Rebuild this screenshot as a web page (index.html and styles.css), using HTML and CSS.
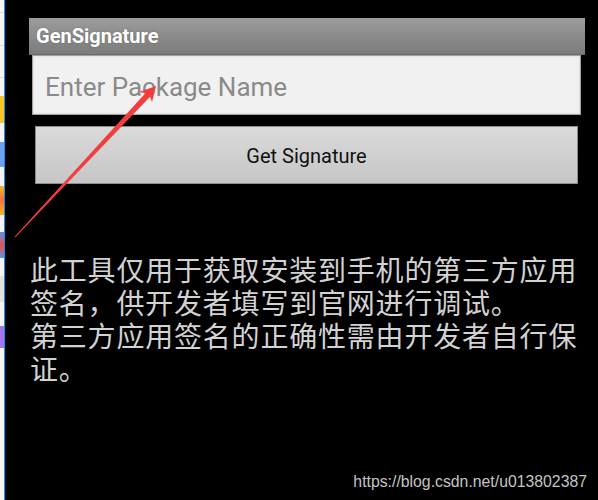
FILE: index.html
```html
<!DOCTYPE html>
<html lang="zh">
<head>
    <meta charset="UTF-8">
    <meta name="viewport" content="width=device-width, initial-scale=1.0">
    <title>GenSignature</title>
    <link rel="stylesheet" href="styles.css">
</head>
<body>

    <div class="screen">
        <div class="side-strip"></div>

        <div class="app">
            <div class="title-bar">GenSignature</div>
            <div class="input-container">
                <input type="text" class="input-field" placeholder="Enter Package Name">
            </div>
            <button type="button" class="sign-btn">Get Signature</button>
            <p class="note">此工具仅用于获取安装到手机的第三方应用签名，供开发者填写到官网进行调试。<br>第三方应用签名的正确性需由开发者自行保证。</p>
        </div>

        <!-- rote Markierung ueber dem Screenshot -->
        <svg class="arrow" width="598" height="500" viewBox="0 0 598 500">
            <polygon points="156,86 139,92 145.6,93 14.6,236.7 15.4,237.3 150,96.8 152,102" fill="#f23d3d"/>
        </svg>

        <div class="watermark">https://blog.csdn.net/u013802387</div>
    </div>

</body>
</html>
```

FILE: styles.css
```css
        body, html {
            margin: 0;
            padding: 0;
            background-color: #000;
        }

        .screen {
            position: relative;
            width: 598px;
            height: 500px;
            display: flex;
            overflow: hidden;
            background-color: #000;
        }

        /* Rest vom Nachbarfenster links */
        .side-strip {
            width: 4px;
            flex-shrink: 0;
            border-right: 1px solid #1e88e5;
            background: linear-gradient(to bottom,
                #f4f5f7 0, #f4f5f7 12px, #d9d9d9 12px, #d9d9d9 13px,
                #f4f5f7 13px, #f4f5f7 45px, #d9d9d9 45px, #d9d9d9 46px,
                #f4f5f7 46px, #f4f5f7 77px, #d9d9d9 77px, #d9d9d9 78px,
                #f4f5f7 78px, #f4f5f7 96px, #f7c62a 96px, #f7c62a 123px,
                #f4f5f7 123px, #f4f5f7 142px, #6d9ff5 142px, #6d9ff5 167px,
                #f4f5f7 167px, #f4f5f7 186px, #f5b82a 186px, #f0704a 200px, #f5b82a 215px,
                #f4f5f7 215px, #f4f5f7 232px, #5b93f0 232px, #e85050 245px, #5b93f0 258px,
                #f4f5f7 258px, #f4f5f7 276px, #e2e2e2 276px, #e2e2e2 302px,
                #f4f5f7 302px, #f4f5f7 326px, #a276f2 326px, #a276f2 348px,
                #f4f5f7 348px);
        }

        .app {
            flex: 1;
            padding-top: 18px;
            padding-left: 24px;
        }

        .title-bar {
            width: 556px;
            height: 37px;
            box-sizing: border-box;
            padding: 1px 0 0 7px;
            background: linear-gradient(to bottom, #9c9c9c, #7b7b7b);
            border-bottom: 1px solid #6a6a6a;
            color: #fff;
            font-family: Roboto, 'Liberation Sans', sans-serif;
            font-weight: bold;
            font-size: 20px;
            line-height: 35px;
            text-shadow: 0 0 2px rgba(0, 0, 0, 0.25);
        }

        .input-container {
            margin-left: 3px;
            width: 549px;
            height: 60px;
        }

        .input-field {
            width: 100%;
            height: 100%;
            box-sizing: border-box;
            padding: 3px 0 0 12px;
            border: 1px solid #a0a0a0;
            background-color: #f1f1f1;
            box-shadow: inset 0 0 3px rgba(0, 0, 0, 0.12);
            font-family: Roboto, 'Liberation Sans', sans-serif;
            font-size: 26px;
            color: #222;
            outline: none;
        }

        ::placeholder {
            color: #8a8a8a;
        }

        .sign-btn {
            display: block;
            margin: 11px 0 0 6px;
            width: 543px;
            height: 58px;
            padding-top: 3px;
            border: 1px solid #8c8c8c;
            border-radius: 0;
            background: linear-gradient(to bottom, #dadada, #c6c6c6);
            font-family: Roboto, 'Liberation Sans', sans-serif;
            font-size: 20px;
            color: #111;
            cursor: pointer;
        }

        .note {
            margin: 69px 0 0 1px;
            width: 560px;
            font-family: 'Noto Sans CJK SC', 'Noto Sans', sans-serif;
            font-size: 28px;
            letter-spacing: 0.8px;
            line-height: 33px;
            color: #d2d2d2;
        }

        .arrow {
            position: absolute;
            left: 0;
            top: 0;
            pointer-events: none;
        }

        .watermark {
            position: absolute;
            right: 11px;
            bottom: 9px;
            font-family: 'Liberation Sans', Arial, sans-serif;
            font-size: 15.8px;
            color: #c4c4c4;
        }
```
